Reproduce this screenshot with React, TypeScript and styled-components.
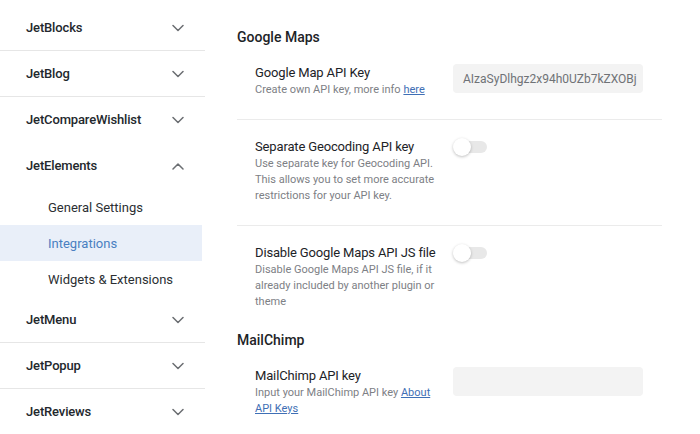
import React from "react";
import styled, { createGlobalStyle } from "styled-components";

const Global = createGlobalStyle`
  html, body { margin: 0; padding: 0; background: #fff; }
  body { font-family: Roboto, "Noto Sans", "Liberation Sans", sans-serif; -webkit-font-smoothing: antialiased; }
  * { box-sizing: border-box; }
`;

const Page = styled.div`
  display: flex;
  width: 700px;
  height: 434px;
  overflow: hidden;
  background: #fff;
`;

const Sidebar = styled.nav`
  width: 205px;
  flex-shrink: 0;
  padding-top: 5px;
  display: flex;
  flex-direction: column;
`;

const NavRow = styled.div<{ $border?: boolean }>`
  height: 46px;
  flex-shrink: 0;
  display: flex;
  align-items: center;
  justify-content: space-between;
  padding: 0 21px 0 26px;
  font-size: 13px;
  font-weight: 500;
  letter-spacing: -0.15px;
  color: #23282d;
  border-bottom: 1px solid ${(p) => (p.$border ? "#e6e6e6" : "transparent")};
`;

const SubItem = styled.div<{ $active?: boolean }>`
  height: 36px;
  flex-shrink: 0;
  display: flex;
  align-items: center;
  padding-left: 48px;
  margin-right: 3px;
  font-size: 13px;
  color: ${(p) => (p.$active ? "#4a7fc1" : "#2b2f33")};
  background: ${(p) => (p.$active ? "#e9eff9" : "transparent")};
`;

const Main = styled.main`
  flex: 1;
  padding: 28px 38px 0 32px;
  display: flex;
  flex-direction: column;
`;

const SectionTitle = styled.h2`
  margin: 0;
  height: 18px;
  line-height: 18px;
  font-size: 14px;
  font-weight: 500;
  color: #1d2327;
`;

const SettingRow = styled.div<{ $border?: boolean }>`
  display: flex;
  align-items: flex-start;
  gap: 18px;
  padding: 18px 0 ${(p) => (p.$border ? "21px" : "20px")} 18px;
  border-bottom: 1px solid ${(p) => (p.$border ? "#ebebeb" : "transparent")};
`;

const Info = styled.div`
  width: 180px;
  flex-shrink: 0;
`;

const Label = styled.div`
  font-size: 13px;
  line-height: 18px;
  letter-spacing: -0.15px;
  color: #1d2327;
  white-space: nowrap;
`;

const Desc = styled.div`
  font-size: 11px;
  line-height: 16px;
  color: #7d8085;
`;

const Link = styled.a`
  color: #3f6fb5;
  text-decoration: underline;
`;

const Input = styled.div`
  width: 190px;
  height: 29px;
  background: #f3f3f3;
  border-radius: 4px;
  padding: 0 10px;
  display: flex;
  align-items: center;
  font-size: 12px;
  color: #6f7276;
  white-space: nowrap;
  overflow: hidden;
`;

const Toggle = styled.div`
  position: relative;
  width: 34px;
  height: 18px;
  flex-shrink: 0;
`;

const Track = styled.div`
  position: absolute;
  left: 6px;
  top: 3px;
  width: 28px;
  height: 12px;
  border-radius: 6px;
  background: #e8e8e8;
`;

const Knob = styled.div`
  position: absolute;
  left: 0;
  top: 0;
  width: 18px;
  height: 18px;
  border-radius: 50%;
  background: #fff;
  box-shadow: 0 1px 3px rgba(0, 0, 0, 0.25);
`;

const Chevron = ({ up }: { up?: boolean }) => (
  <svg width="12" height="8" viewBox="0 0 12 8" fill="none">
    <path
      d={up ? "M1 7 L6 2 L11 7" : "M1 1.5 L6 6.5 L11 1.5"}
      stroke="#6b6e72"
      strokeWidth="1.5"
      strokeLinecap="round"
      strokeLinejoin="round"
    />
  </svg>
);

const Switch = () => (
  <Toggle>
    <Track />
    <Knob />
  </Toggle>
);

export default function App() {
  return (
    <>
      <Global />
      <Page>
        <Sidebar>
          <NavRow $border>
            JetBlocks <Chevron />
          </NavRow>
          <NavRow $border>
            JetBlog <Chevron />
          </NavRow>
          <NavRow>
            JetCompareWishlist <Chevron />
          </NavRow>
          <NavRow>
            JetElements <Chevron up />
          </NavRow>
          <SubItem>General Settings</SubItem>
          <SubItem $active>Integrations</SubItem>
          <SubItem>Widgets &amp; Extensions</SubItem>
          <NavRow $border>
            JetMenu <Chevron />
          </NavRow>
          <NavRow $border>
            JetPopup <Chevron />
          </NavRow>
          <NavRow>
            JetReviews <Chevron />
          </NavRow>
        </Sidebar>
        <Main>
          <SectionTitle>Google Maps</SectionTitle>
          <SettingRow $border>
            <Info>
              <Label>Google Map API Key</Label>
              <Desc>
                Create own API key, more info <Link href="#">here</Link>
              </Desc>
            </Info>
            <Input>AIzaSyDlhgz2x94h0UZb7kZXOBj</Input>
          </SettingRow>
          <SettingRow $border>
            <Info>
              <Label>Separate Geocoding API key</Label>
              <Desc>
                Use separate key for Geocoding API. This allows you to set more accurate restrictions for your API key.
              </Desc>
            </Info>
            <Switch />
          </SettingRow>
          <SettingRow>
            <Info>
              <Label>Disable Google Maps API JS file</Label>
              <Desc>
                Disable Google Maps API JS file, if it already included by another plugin or theme
              </Desc>
            </Info>
            <Switch />
          </SettingRow>
          <SectionTitle>MailChimp</SectionTitle>
          <SettingRow>
            <Info>
              <Label>MailChimp API key</Label>
              <Desc>
                Input your MailChimp API key <Link href="#">About</Link>
                <br />
                <Link href="#">API Keys</Link>
              </Desc>
            </Info>
            <Input />
          </SettingRow>
        </Main>
      </Page>
    </>
  );
}
